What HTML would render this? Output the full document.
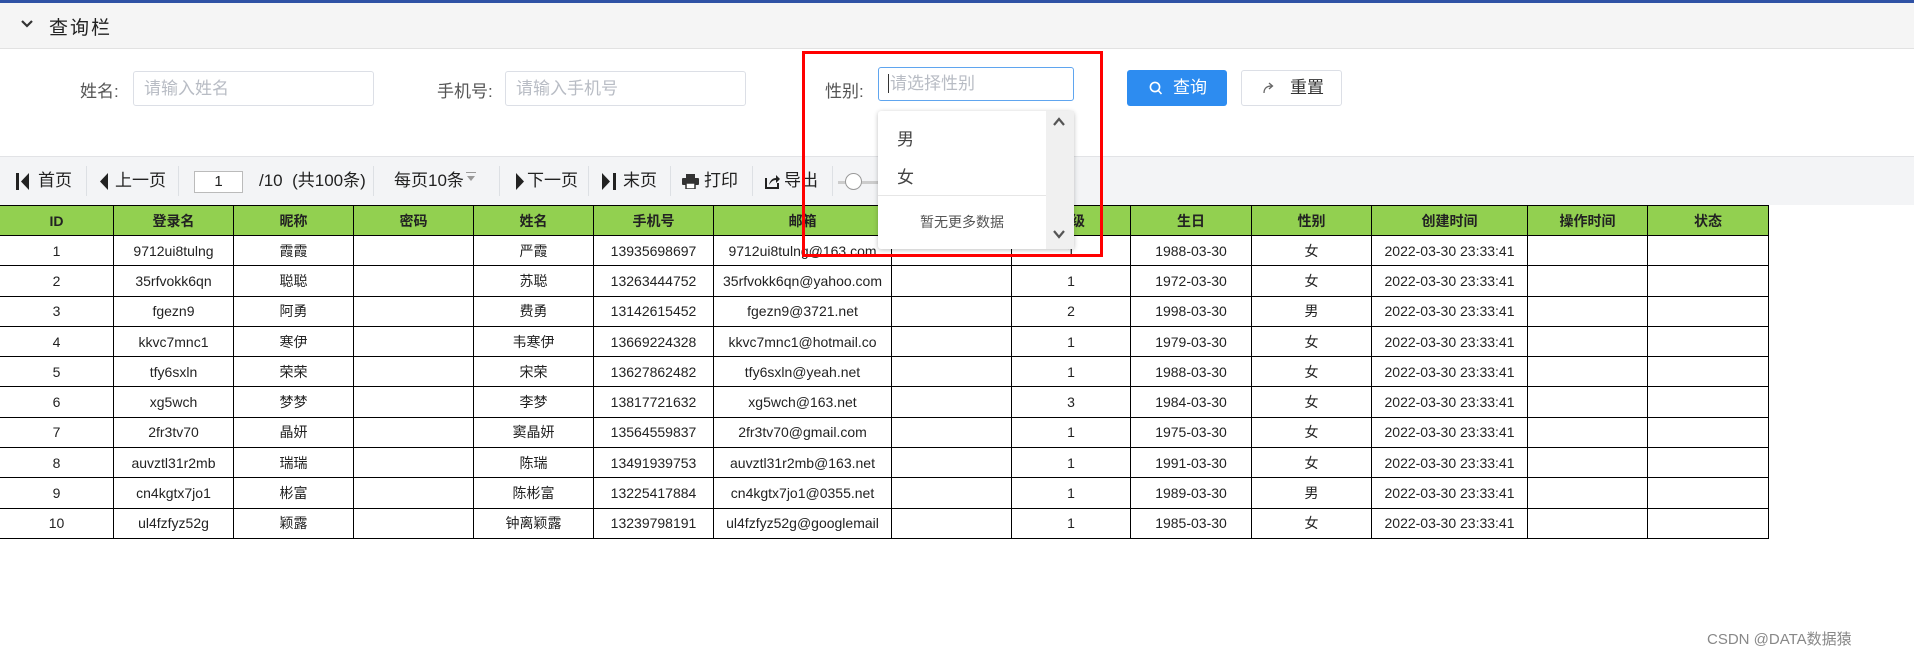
<!DOCTYPE html>
<html><head><meta charset="utf-8"><style>
*{box-sizing:border-box;margin:0;padding:0}
body{width:1914px;height:657px;background:#fff;position:relative;overflow:hidden;font-family:"Liberation Sans","Noto Sans CJK SC",sans-serif;color:#222}
.a{position:absolute}
.inp{position:absolute;border:1px solid #dcdfe6;border-radius:3px;background:#fff;color:#b8bcc4;font-size:17px;padding-left:10px;line-height:33px}
.lbl{position:absolute;font-size:17px;color:#555}
.tb{position:absolute;top:170px;font-size:17px;color:#222;line-height:22px}
.sep{position:absolute;top:166px;width:1px;height:30px;background:#dde0e4}
table{position:absolute;left:0;top:205px;border-collapse:collapse;font-size:14px;table-layout:fixed}
td,th{border:1px solid #000;text-align:center;height:30.3px;padding:0;white-space:nowrap;overflow:hidden}
th{background:#92d050;font-weight:bold;height:30px}
tr td:first-child,tr th:first-child{border-left:none}
</style></head><body>
<div class="a" style="left:0;top:0;width:1914px;height:3px;background:#2f52a5"></div>
<div class="a" style="left:0;top:3px;width:1914px;height:46px;background:#f5f5f5;border-bottom:1px solid #e2e2e2"></div>
<svg class="a" style="left:20px;top:19px" width="14" height="10" viewBox="0 0 14 10"><path d="M2 2 L7 7 L12 2" stroke="#333" stroke-width="2.2" fill="none"/></svg>
<div class="a" style="left:49px;top:13px;font-size:19px;letter-spacing:2px;color:#222">查询栏</div>

<div class="lbl" style="left:80px;top:77px">姓名:</div>
<div class="inp" style="left:133px;top:71px;width:241px;height:35px">请输入姓名</div>
<div class="lbl" style="left:437px;top:77px">手机号:</div>
<div class="inp" style="left:505px;top:71px;width:241px;height:35px">请输入手机号</div>
<div class="lbl" style="left:825px;top:77px">性别:</div>
<div class="inp" style="left:878px;top:67px;width:196px;height:34px;border-color:#5fa5ef;line-height:32px;padding-left:9px"><span style="border-left:1px solid #333;margin-right:1px"></span>请选择性别</div>
<div class="a" style="left:1127px;top:70px;width:100px;height:36px;background:#2d8cf0;border-radius:3px;color:#fff;font-size:17px;line-height:36px;padding-left:22px">
<svg style="position:absolute;left:22px;top:11px" width="14" height="15" viewBox="0 0 14 15"><circle cx="6" cy="6" r="4.6" stroke="#fff" stroke-width="1.6" fill="none"/><path d="M9.3 9.5 L12.5 13" stroke="#fff" stroke-width="1.6"/></svg><span style="margin-left:24px">查询</span></div>
<div class="a" style="left:1241px;top:70px;width:101px;height:36px;border:1px solid #dcdfe6;border-radius:3px;color:#333;font-size:17px;line-height:34px">
<svg style="position:absolute;left:20px;top:11px" width="14" height="12" viewBox="0 0 14 12"><path d="M2 11 C2 6 5 4 10 4 M7 1 L10.5 4 L7 7" stroke="#666" stroke-width="1.3" fill="none"/></svg><span style="position:absolute;left:48px">重置</span></div>

<div class="a" style="left:0;top:156px;width:1914px;height:49px;background:#f3f4f6;border-top:1px solid #e2e3e6"></div>
<svg class="a" style="left:16px;top:173px" width="14" height="17" viewBox="0 0 14 17"><rect x="0" y="0" width="3" height="17" fill="#222"/><path d="M13 0 L5 8.5 L13 17Z" fill="#222"/></svg>
<div class="tb" style="left:38px">首页</div>
<div class="sep" style="left:86px"></div>
<svg class="a" style="left:100px;top:173px" width="9" height="17" viewBox="0 0 9 17"><path d="M8 0 L0 8.5 L8 17Z" fill="#222"/></svg>
<div class="tb" style="left:115px">上一页</div>
<div class="sep" style="left:178px"></div>
<div class="a" style="left:194px;top:171px;width:49px;height:22px;border:1px solid #bbb;background:#fff;font-size:15px;text-align:center;line-height:20px">1</div>
<div class="tb" style="left:259px">/10 &nbsp;(共100条)</div>
<div class="sep" style="left:373px"></div>
<div class="tb" style="left:394px">每页10条</div>
<svg class="a" style="left:466px;top:172px" width="10" height="12" viewBox="0 0 10 12"><rect x="0" y="0" width="10" height="1" fill="#999"/><path d="M1 4 L9 4 L5 9Z" fill="#999"/></svg>
<div class="sep" style="left:499px"></div>
<svg class="a" style="left:515px;top:173px" width="9" height="17" viewBox="0 0 9 17"><path d="M1 0 L9 8.5 L1 17Z" fill="#222"/></svg>
<div class="tb" style="left:527px">下一页</div>
<div class="sep" style="left:588px"></div>
<svg class="a" style="left:602px;top:173px" width="14" height="17" viewBox="0 0 14 17"><path d="M0 0 L8 8.5 L0 17Z" fill="#222"/><rect x="11" y="0" width="3" height="17" fill="#222"/></svg>
<div class="tb" style="left:623px">末页</div>
<div class="sep" style="left:670px"></div>
<svg class="a" style="left:682px;top:174px" width="17" height="15" viewBox="0 0 17 15"><rect x="4" y="0" width="9" height="4" fill="#333"/><rect x="0" y="4" width="17" height="7" rx="1" fill="#333"/><rect x="4" y="9" width="9" height="6" fill="#fff" stroke="#333" stroke-width="1.5"/></svg>
<div class="tb" style="left:704px">打印</div>
<div class="sep" style="left:752px"></div>
<svg class="a" style="left:765px;top:173px" width="15" height="16" viewBox="0 0 15 16"><path d="M1 5 V15 H13 V10" stroke="#222" stroke-width="2" fill="none"/><path d="M4 12 C5 7 8 5 11 5 V2 L15 6 L11 10 V7 C8 7 6 9 4 12Z" fill="#222"/></svg>
<div class="tb" style="left:784px">导出</div>
<div class="sep" style="left:832px"></div>
<div class="a" style="left:838px;top:181px;width:40px;height:3px;background:#ccc"></div>
<div class="a" style="left:845px;top:173px;width:17px;height:17px;border:1px solid #999;border-radius:50%;background:#fff"></div>

<table>
<colgroup><col style="width:113.5px"><col style="width:120px"><col style="width:120px"><col style="width:120px"><col style="width:120px"><col style="width:120px"><col style="width:178px"><col style="width:120px"><col style="width:119px"><col style="width:121px"><col style="width:120px"><col style="width:156px"><col style="width:120px"><col style="width:121px"></colgroup>
<tr><th>ID</th><th>登录名</th><th>昵称</th><th>密码</th><th>姓名</th><th>手机号</th><th>邮箱</th><th></th><th>等级</th><th>生日</th><th>性别</th><th>创建时间</th><th>操作时间</th><th>状态</th></tr>
<tr><td>1</td><td>9712ui8tulng</td><td>霞霞</td><td></td><td>严霞</td><td>13935698697</td><td>9712ui8tulng@163.com</td><td></td><td>1</td><td>1988-03-30</td><td>女</td><td>2022-03-30 23:33:41</td><td></td><td></td></tr>
<tr><td>2</td><td>35rfvokk6qn</td><td>聪聪</td><td></td><td>苏聪</td><td>13263444752</td><td>35rfvokk6qn@yahoo.com</td><td></td><td>1</td><td>1972-03-30</td><td>女</td><td>2022-03-30 23:33:41</td><td></td><td></td></tr>
<tr><td>3</td><td>fgezn9</td><td>阿勇</td><td></td><td>费勇</td><td>13142615452</td><td>fgezn9@3721.net</td><td></td><td>2</td><td>1998-03-30</td><td>男</td><td>2022-03-30 23:33:41</td><td></td><td></td></tr>
<tr><td>4</td><td>kkvc7mnc1</td><td>寒伊</td><td></td><td>韦寒伊</td><td>13669224328</td><td>kkvc7mnc1@hotmail.co</td><td></td><td>1</td><td>1979-03-30</td><td>女</td><td>2022-03-30 23:33:41</td><td></td><td></td></tr>
<tr><td>5</td><td>tfy6sxln</td><td>荣荣</td><td></td><td>宋荣</td><td>13627862482</td><td>tfy6sxln@yeah.net</td><td></td><td>1</td><td>1988-03-30</td><td>女</td><td>2022-03-30 23:33:41</td><td></td><td></td></tr>
<tr><td>6</td><td>xg5wch</td><td>梦梦</td><td></td><td>李梦</td><td>13817721632</td><td>xg5wch@163.net</td><td></td><td>3</td><td>1984-03-30</td><td>女</td><td>2022-03-30 23:33:41</td><td></td><td></td></tr>
<tr><td>7</td><td>2fr3tv70</td><td>晶妍</td><td></td><td>窦晶妍</td><td>13564559837</td><td>2fr3tv70@gmail.com</td><td></td><td>1</td><td>1975-03-30</td><td>女</td><td>2022-03-30 23:33:41</td><td></td><td></td></tr>
<tr><td>8</td><td>auvztl31r2mb</td><td>瑞瑞</td><td></td><td>陈瑞</td><td>13491939753</td><td>auvztl31r2mb@163.net</td><td></td><td>1</td><td>1991-03-30</td><td>女</td><td>2022-03-30 23:33:41</td><td></td><td></td></tr>
<tr><td>9</td><td>cn4kgtx7jo1</td><td>彬富</td><td></td><td>陈彬富</td><td>13225417884</td><td>cn4kgtx7jo1@0355.net</td><td></td><td>1</td><td>1989-03-30</td><td>男</td><td>2022-03-30 23:33:41</td><td></td><td></td></tr>
<tr><td>10</td><td>ul4fzfyz52g</td><td>颖露</td><td></td><td>钟离颖露</td><td>13239798191</td><td>ul4fzfyz52g@googlemail</td><td></td><td>1</td><td>1985-03-30</td><td>女</td><td>2022-03-30 23:33:41</td><td></td><td></td></tr>
</table>

<div class="a" style="left:878px;top:111px;width:196px;height:138px;background:#fff;box-shadow:0 1px 5px rgba(0,0,0,0.25);border-radius:3px"></div>
<div class="a" style="left:1046px;top:111px;width:28px;height:138px;background:#f0f0f0"></div>
<svg class="a" style="left:1052px;top:117px" width="14" height="10" viewBox="0 0 14 10"><path d="M2 8 L7 2 L12 8" stroke="#555" stroke-width="2.2" fill="none"/></svg>
<svg class="a" style="left:1052px;top:229px" width="14" height="10" viewBox="0 0 14 10"><path d="M2 2 L7 8 L12 2" stroke="#555" stroke-width="2.2" fill="none"/></svg>
<div class="a" style="left:897px;top:125px;font-size:17px;color:#444">男</div>
<div class="a" style="left:897px;top:163px;font-size:17px;color:#444">女</div>
<div class="a" style="left:878px;top:195px;width:168px;height:1px;background:#e6e6e6"></div>
<div class="a" style="left:878px;top:212px;width:168px;text-align:center;font-size:14px;color:#555">暂无更多数据</div>

<div class="a" style="left:802px;top:51px;width:301px;height:206px;border:3px solid #f00"></div>
<div class="a" style="left:1707px;top:628px;font-size:15px;color:#888">CSDN @DATA数据猿</div>
</body></html>
